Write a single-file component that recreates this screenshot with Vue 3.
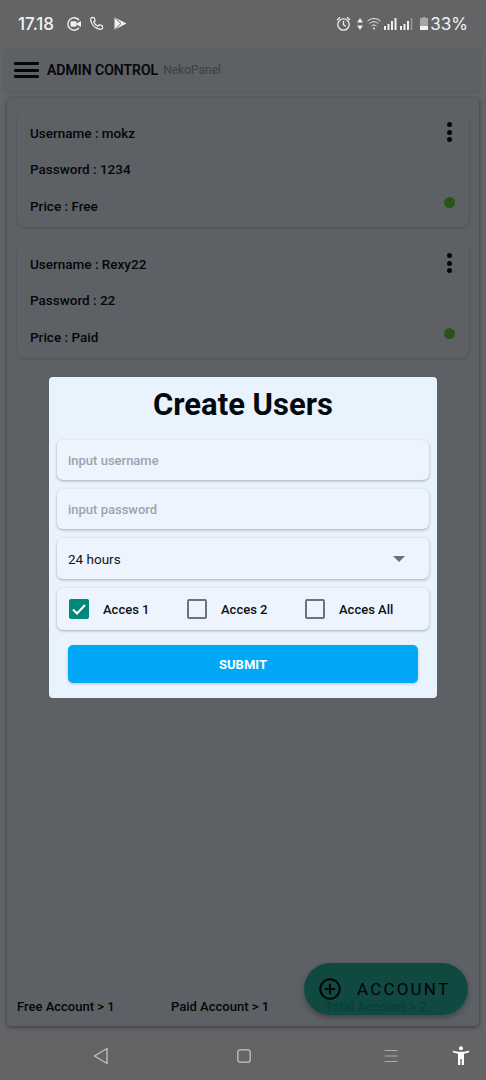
<script setup>
import { ref } from 'vue'

const users = ref([
  { name: 'mokz', password: '1234', price: 'Free' },
  { name: 'Rexy22', password: '22', price: 'Paid' }
])

const username = ref('')
const password = ref('')

const access = ref([
  { label: 'Acces 1', on: true },
  { label: 'Acces 2', on: false },
  { label: 'Acces All', on: false }
])
</script>

<template>
  <div class="screen">
    <div class="status">
      <span class="time">17.18</span>
      <svg class="st-icon first" width="16" height="16" viewBox="0 0 16 16" fill="none">
        <path d="M13 4.2A6.2 6.2 0 1 0 13 11.8" stroke="#f2f2f2" stroke-width="1.4"/>
        <rect x="4.5" y="5.2" width="6" height="5.6" rx="1" fill="#f2f2f2"/>
        <path d="M10.5 7.4 15 5v6l-4.500-2.400z" fill="#f2f2f2"/>
      </svg>
      <svg class="st-icon" width="15" height="15" viewBox="0 0 16 16" fill="none">
        <path d="M3 1.500 5.600 1.800 6.600 5 5 6.400c.8 1.900 2.300 3.400 4.400 4.500l1.500-1.600 3.300 1 .3 2.700c-.6.9-1.500 1.300-2.600 1.200C6.500 13.300 2.500 9.200 1.700 4.200 1.600 3 2.100 2.100 3 1.500z" stroke="#f2f2f2" stroke-width="1.300"/>
      </svg>
      <svg class="st-icon play" width="14" height="15" viewBox="0 0 14 15" fill="none">
        <path d="M1.500 1.200v12.600L13.500 7.500z" fill="#f2f2f2"/>
        <path d="M1.500 1.200 8 7.500l-6.500 6.300" stroke="#636467" stroke-width="1"/>
      </svg>
      <div class="st-right">
        <svg width="15" height="16" viewBox="0 0 15 16" fill="none">
          <circle cx="7.500" cy="8.500" r="5.700" stroke="#eee" stroke-width="1.300"/>
          <path d="M7.500 5v3.800l2.400 1.400M1 4l3-2.800M14 4l-3-2.800" stroke="#eee" stroke-width="1.300"/>
        </svg>
        <svg class="arrows" width="6" height="12" viewBox="0 0 6 12">
          <path d="M3 0 6 4.500H0zM3 12 0 7.500h6z" fill="#eee"/>
        </svg>
        <svg class="wifi" width="14" height="13" viewBox="0 0 14 13" fill="none">
          <path d="M.5 4.200c3.700-3.500 9.300-3.500 13 0M2.500 6.600c2.600-2.400 6.400-2.400 9 0M4.500 9c1.500-1.300 3.500-1.300 5 0" stroke="#eee" stroke-width="1"/>
          <circle cx="7" cy="11.500" r="1" fill="#eee"/>
        </svg>
        <svg class="signal" width="30" height="12" viewBox="0 0 30 12">
          <path d="M0 8h2v4H0zM3.500 6h2v6h-2zM7 3h2v9H7zM10.500 0h2v12h-2zM16 8h2v4h-2zM19.500 6h2v6h-2zM23 3h2v9h-2z" fill="#eee"/>
          <path d="M26.500 0h2v12h-2z" fill="#8e8f91"/>
        </svg>
        <svg class="battery" width="8" height="13" viewBox="0 0 8 13">
          <path d="M2.500 0h3v1H8v12H0V1h2.500z" fill="#a5a6a8"/>
          <path d="M0 9h8v4H0z" fill="#f2f2f2"/>
        </svg>
        <span class="battery-text">33%</span>
      </div>
    </div>

    <header class="toolbar">
      <div class="burger"><i></i><i></i><i></i></div>
      <strong>ADMIN CONTROL</strong>
      <span>NekoPanel</span>
    </header>

    <main class="panel">
      <div class="list">
        <article v-for="u in users" :key="u.name" class="user-card">
          <div class="rows">
            <p>Username : {{ u.name }}</p>
            <p>Password : {{ u.password }}</p>
            <p>Price : {{ u.price }}</p>
          </div>
          <div class="side">
            <div class="dots"><i></i><i></i><i></i></div>
            <div class="online"></div>
          </div>
        </article>
      </div>
      <footer class="totals">
        <span>Free Account &gt; 1</span>
        <span>Paid Account &gt; 1</span>
        <span>Total Account &gt; 2</span>
      </footer>
    </main>

    <button class="fab">
      <svg width="24" height="24" viewBox="0 0 24 24" fill="none">
        <circle cx="12" cy="12" r="9.700" stroke="#06090c" stroke-width="2"/>
        <path d="M12 6.800v10.400M6.800 12h10.400" stroke="#06090c" stroke-width="2"/>
      </svg>
      <span>ACCOUNT</span>
    </button>

    <nav class="navbar">
      <svg width="16" height="18" viewBox="0 0 16 18" fill="none">
        <path d="M14 1.500v15L1.500 9z" stroke="#c4c5c7" stroke-width="1.300" stroke-linejoin="round"/>
      </svg>
      <svg width="14" height="14" viewBox="0 0 14 14" fill="none">
        <rect x=".8" y=".8" width="12.400" height="12.400" rx="2.500" stroke="#c4c5c7" stroke-width="1.300"/>
      </svg>
      <svg width="14" height="14" viewBox="0 0 14 14" fill="none">
        <path d="M.5 1.500h13M.5 7h13M.5 12.500h13" stroke="#a9aaac" stroke-width="1.200"/>
      </svg>
      <svg class="a11y" width="18" height="20" viewBox="0 0 18 20">
        <circle cx="9" cy="2.200" r="2" fill="#fff"/>
        <path d="M.6 4.800 1.200 6.400 6 7.800V19h2.300v-6h1.400v6H12V7.800l4.800-1.400.6-1.600-5.600 1H6.200z" fill="#fff"/>
      </svg>
    </nav>

    <div class="scrim"></div>

    <section class="modal">
      <h1>Create Users</h1>
      <input v-model="username" class="field" placeholder="input username" />
      <input v-model="password" class="field" placeholder="input password" />
      <div class="field select">
        <span>24 hours</span>
        <i class="caret"></i>
      </div>
      <div class="field checks">
        <label v-for="a in access" :key="a.label" class="check">
          <span class="box" :class="{ on: a.on }">
            <svg v-if="a.on" width="20" height="20" viewBox="0 0 20 20" fill="none">
              <path d="M4 10.500 8 14.500 16 6" stroke="#fff" stroke-width="2"/>
            </svg>
          </span>
          {{ a.label }}
        </label>
      </div>
      <button class="submit">SUBMIT</button>
    </section>
  </div>
</template>

<style>
html,
body {
  margin: 0;
  background: #636467;
}
</style>

<style scoped>
.screen {
  position: relative;
  width: 486px;
  height: 1080px;
  overflow: hidden;
  display: flex;
  flex-direction: column;
  background: #f7fafe;
  font-family: Roboto, "Liberation Sans", sans-serif;
  color: #0c1014;
}

/* status bar and navbar sit above the dim layer */
.status {
  position: relative;
  z-index: 2;
  height: 47px;
  flex: none;
  display: flex;
  align-items: center;
  padding: 0 18px;
  box-sizing: border-box;
  color: #f2f2f2;
}

.time {
  font-family: Inter, Roboto, sans-serif;
  font-size: 17px;
  font-weight: 500;
  line-height: 44px;
}

.st-icon {
  margin-left: 7px;
}

.st-icon.first {
  margin-left: 12px;
}

.st-icon.play {
  margin-left: 9px;
}

.st-right {
  margin-left: auto;
  display: flex;
  align-items: center;
}

.arrows {
  margin-left: 6px;
}

.wifi {
  margin-left: 4px;
}

.signal {
  margin-left: 3px;
}

.battery {
  margin-left: 6px;
}

.battery-text {
  margin-left: 2px;
  font-family: Inter, Roboto, sans-serif;
  font-size: 17px;
  font-weight: 400;
}

.toolbar {
  flex: none;
  height: 44px;
  margin: 1px 6px 0 4px;
  padding-left: 10px;
  display: flex;
  align-items: center;
  background: #eaf2fb;
  border-radius: 4px;
  box-shadow: 0 1px 3px rgba(0, 0, 0, 0.12);
}

.burger {
  width: 25px;
  margin-right: 8px;
  display: flex;
  flex-direction: column;
  gap: 3.500px;
}

.burger i {
  height: 3px;
  border-radius: 1px;
  background: #0c1014;
}

.toolbar strong {
  font-size: 14px;
  font-weight: 500;
  -webkit-text-stroke: 0.2px #0c1014;
}

.toolbar span {
  margin-left: 5px;
  font-size: 12px;
  color: #9aa0a8;
}

.panel {
  flex: 1;
  margin: 6px 7px 0;
  padding: 12px 10px 10px;
  display: flex;
  flex-direction: column;
  background: #e9f2fc;
  border-radius: 4px;
  box-shadow: 0 1px 4px rgba(0, 0, 0, 0.45);
}

.list {
  flex: 1;
  display: flex;
  flex-direction: column;
  gap: 14px;
}

.user-card {
  height: 117px;
  box-sizing: border-box;
  padding: 5px 13px 3px;
  display: flex;
  justify-content: space-between;
  border-radius: 8px;
  box-shadow: 0 1px 3px rgba(0, 0, 0, 0.2);
}

.rows {
  display: flex;
  flex-direction: column;
  justify-content: space-around;
}

.rows p {
  margin: 0;
  font-size: 13.500px;
  font-weight: 500;
}

.side {
  width: 14px;
  padding: 7px 0 16px;
  display: flex;
  flex-direction: column;
  justify-content: space-between;
  align-items: center;
}

.dots {
  display: flex;
  flex-direction: column;
  gap: 2.500px;
}

.dots i {
  width: 5px;
  height: 5px;
  border-radius: 50%;
  background: #0c1014;
}

.online {
  width: 11px;
  height: 11px;
  border-radius: 50%;
  background: #6ccf3a;
}

.totals {
  display: grid;
  grid-template-columns: repeat(3, 154px);
  height: 20px;
  align-items: center;
  font-size: 13px;
  font-weight: 500;
}

.fab {
  position: absolute;
  left: 304px;
  top: 963px;
  width: 164px;
  height: 52px;
  padding: 0 0 0 14px;
  display: flex;
  align-items: center;
  gap: 15px;
  border: none;
  border-radius: 26px;
  background: rgba(18, 175, 155, 0.9);
  box-shadow: 0 3px 6px rgba(0, 0, 0, 0.3);
  font-family: Roboto, sans-serif;
  font-size: 17px;
  font-weight: 400;
  letter-spacing: 2.200px;
  color: #06090c;
}

.navbar {
  position: relative;
  z-index: 2;
  flex: none;
  height: 54px;
  display: flex;
  align-items: center;
  padding-top: 6px;
  box-sizing: border-box;
}

.navbar svg:nth-child(1) {
  margin-left: 93px;
}

.navbar svg:nth-child(2) {
  margin-left: 128px;
}

.navbar svg:nth-child(3) {
  margin-left: 133px;
}

.a11y {
  margin-left: 54px;
}

.scrim {
  position: absolute;
  inset: 0;
  z-index: 1;
  background: rgba(0, 0, 0, 0.6);
}

.modal {
  position: absolute;
  z-index: 3;
  left: 49px;
  top: 377px;
  width: 388px;
  height: 321px;
  box-sizing: border-box;
  padding: 0 8px;
  background: #e9f3fe;
  border-radius: 4px;
}

.modal h1 {
  margin: 0;
  height: 63px;
  line-height: 56px;
  text-align: center;
  font-size: 31px;
  font-weight: 700;
  color: #05080c;
}

.field {
  display: block;
  width: 100%;
  height: 40px;
  margin-bottom: 9px;
  box-sizing: border-box;
  padding: 0 11px;
  border: none;
  outline: none;
  border-radius: 6px;
  background: #edf4fe;
  box-shadow: 0 1px 3px rgba(0, 0, 0, 0.3);
  font-family: Roboto, sans-serif;
  font-size: 13px;
  font-weight: 500;
}

.field::placeholder {
  color: #9ea3aa;
  opacity: 1;
}

.select {
  height: 41px;
  padding-right: 24px;
  display: flex;
  align-items: center;
  justify-content: space-between;
  color: #11151a;
  font-weight: 400;
  font-size: 13.500px;
}

.caret {
  width: 0;
  height: 0;
  border-left: 6px solid transparent;
  border-right: 6px solid transparent;
  border-top: 6px solid #6b7078;
}

.checks {
  height: 42px;
  padding: 0 12px;
  display: grid;
  grid-template-columns: repeat(3, 118px);
  align-items: center;
}

.check {
  display: flex;
  align-items: center;
  gap: 14px;
  font-size: 13px;
  font-weight: 500;
  color: #0c1014;
}

.box {
  width: 20px;
  height: 20px;
  flex: none;
  box-sizing: border-box;
  border: 2px solid #6e737b;
  border-radius: 2px;
}

.box.on {
  border: none;
  background: #00897b;
}

.submit {
  display: block;
  width: 350px;
  height: 38px;
  margin: 15px 0 0 11px;
  border: none;
  border-radius: 5px;
  background: #02a8f8;
  box-shadow: 0 1px 3px rgba(0, 0, 0, 0.2);
  color: #fff;
  font-family: Roboto, sans-serif;
  font-size: 13px;
  font-weight: 700;
}
</style>
